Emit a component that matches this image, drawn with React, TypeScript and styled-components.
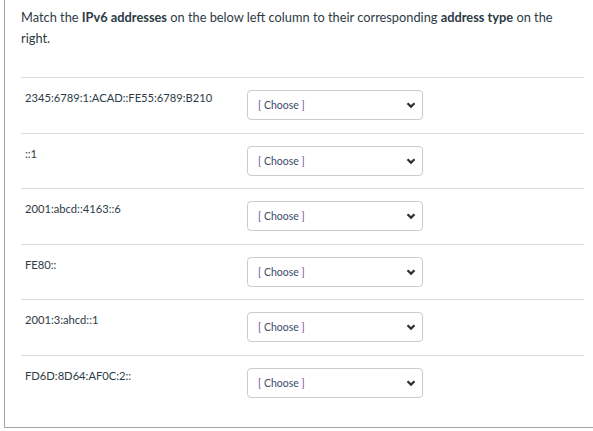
import styled, { createGlobalStyle } from "styled-components";

const GlobalStyle = createGlobalStyle`
  html, body {
    margin: 0;
    padding: 0;
    background: #fff;
  }
  body {
    font-family: Lato, "Noto Sans", "Liberation Sans", sans-serif;
    color: #2d3b45;
  }
`;

const Panel = styled.div`
  margin-left: 4px;
  border-left: 1px solid #a5a5a5;
  border-bottom: 1px solid #a5a5a5;
  padding: 7px 0 17px 16px;
`;

const Intro = styled.p`
  margin: 0 0 28px;
  width: 563px;
  font-size: 12.8px;
  line-height: 21px;
  color: #2d3b45;

  strong {
    font-weight: 700;
  }
`;

const MatchList = styled.div`
  width: 563px;
`;

const MatchRow = styled.div`
  display: flex;
  align-items: flex-start;
  border-top: 1px solid #dcdcdc;
  padding: 12.25px 0;
`;

const Address = styled.div`
  width: 222px;
  padding-left: 4px;
  font-size: 11.2px;
  line-height: 16px;
  color: #2d3b45;
`;

const SelectBox = styled.div`
  width: 176px;
  height: 30px;
  box-sizing: border-box;
  border: 1px solid #c7cdd1;
  border-radius: 4px;
  display: flex;
  align-items: center;
  justify-content: space-between;
  padding: 0 6px 0 10px;
  background: #fff;
`;

const Placeholder = styled.span`
  font-size: 10.5px;
  color: #3d4a6b;

  span {
    color: #7050a0;
  }
`;

const Chevron = () => (
  <svg width="10" height="8" viewBox="0 0 10 8">
    <path d="M1.5 2.2 L5 5.6 L8.5 2.2" fill="none" stroke="#2d3033" strokeWidth="2.2" />
  </svg>
);

const addresses = [
  "2345:6789:1:ACAD::FE55:6789:B210",
  "::1",
  "2001:abcd::4163::6",
  "FE80::",
  "2001:3:ahcd::1",
  "FD6D:8D64:AF0C:2::",
];

export default function App() {
  return (
    <>
      <GlobalStyle />
      <Panel>
        <Intro>
          Match the <strong>IPv6 addresses</strong> on the below left column to their corresponding{" "}
          <strong>address type</strong> on the right.
        </Intro>
        <MatchList>
          {addresses.map((addr) => (
            <MatchRow key={addr}>
              <Address>{addr}</Address>
              <SelectBox>
                <Placeholder>
                  <span>[</span> Choose <span>]</span>
                </Placeholder>
                <Chevron />
              </SelectBox>
            </MatchRow>
          ))}
        </MatchList>
      </Panel>
    </>
  );
}
